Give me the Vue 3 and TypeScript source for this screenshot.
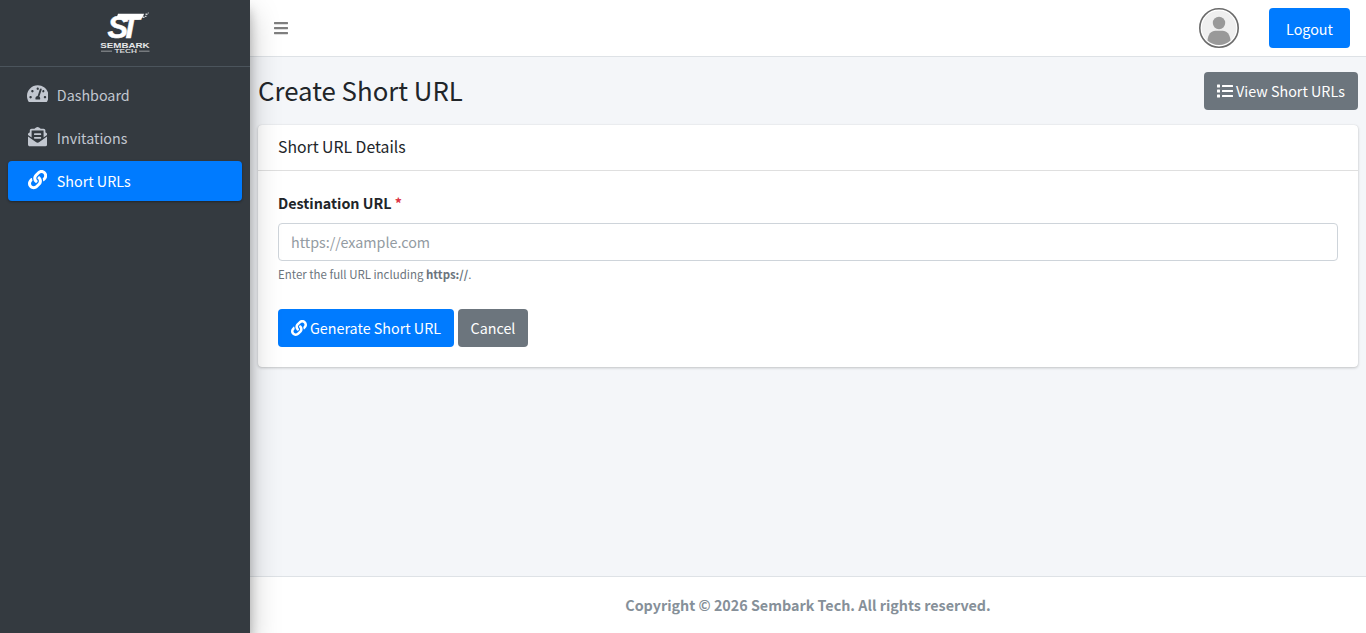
<script setup lang="ts">
interface Glyph {
  box: string
  d: string
  width: number
}

const icons: Record<string, Glyph> = {
  gauge: {
    box: '0 0 576 512',
    width: 1.125,
    d: 'M288 32C128.94 32 0 160.94 0 320c0 52.8 14.25 102.26 39.06 144.8 5.61 9.62 16.3 15.2 27.44 15.2h443c11.14 0 21.83-5.58 27.44-15.2C561.75 422.26 576 372.8 576 320c0-159.06-128.94-288-288-288zm0 64c14.71 0 26.58 10.13 30.32 23.65-1.11 2.26-2.64 4.23-3.45 6.67l-9.22 27.67c-5.13 3.49-10.97 6.01-17.64 6.01-17.67 0-32-14.33-32-32S270.33 96 288 96zM96 384c-17.67 0-32-14.33-32-32s14.33-32 32-32 32 14.33 32 32-14.33 32-32 32zm48-160c-17.67 0-32-14.33-32-32s14.33-32 32-32 32 14.33 32 32-14.33 32-32 32zm246.77-72.41l-61.33 184C343.13 347.33 352 364.54 352 384c0 11.72-3.38 22.55-8.88 32H232.88c-5.5-9.45-8.88-20.28-8.88-32 0-33.94 26.5-61.43 59.9-63.59l61.34-184.01c4.17-12.56 17.73-19.45 30.36-15.17 12.57 4.19 19.35 17.79 15.17 30.36zm14.66 57.2l15.52-46.55c3.47-1.29 7.13-2.23 11.05-2.23 17.67 0 32 14.33 32 32s-14.33 32-32 32c-11.38-.01-20.89-6.28-26.57-15.22zM480 384c-17.67 0-32-14.33-32-32s14.33-32 32-32 32 14.33 32 32-14.33 32-32 32z',
  },
  envelope: {
    box: '0 0 512 512',
    width: 1,
    d: 'M176 216h160c8.84 0 16-7.16 16-16v-16c0-8.84-7.16-16-16-16H176c-8.84 0-16 7.16-16 16v16c0 8.84 7.16 16 16 16zm-16 80c0 8.84 7.16 16 16 16h160c8.84 0 16-7.16 16-16v-16c0-8.84-7.16-16-16-16H176c-8.84 0-16 7.16-16 16v16zm96 121.13c-16.42 0-32.84-5.06-46.86-15.19L0 250.86V464c0 26.51 21.49 48 48 48h416c26.51 0 48-21.49 48-48V250.86L302.86 401.94c-14.02 10.12-30.44 15.19-46.86 15.19zm237.61-254.18c-8.85-6.94-17.24-13.47-29.61-22.81V96c0-26.51-21.49-48-48-48h-77.55c-3.04-2.2-5.87-4.26-9.04-6.56C312.6 29.17 279.2-.35 256 0c-23.2-.35-56.59 29.17-73.41 41.44-3.17 2.3-6 4.36-9.04 6.56H96c-26.51 0-48 21.49-48 48v44.14c-12.37 9.33-20.76 15.87-29.61 22.81A47.995 47.995 0 0 0 0 200.72v10.65l96 69.35V96h320v184.72l96-69.35v-10.65c0-14.74-6.78-28.67-18.39-37.77z',
  },
  link: {
    box: '0 0 512 512',
    width: 1,
    d: 'M326.612 185.391c59.747 59.809 58.927 155.698.36 214.59-.11.12-.24.25-.36.37l-67.2 67.2c-59.27 59.27-155.699 59.262-214.96 0-59.27-59.26-59.27-155.7 0-214.96l37.106-37.106c9.84-9.84 26.786-3.3 27.294 10.606.648 17.722 3.826 35.527 9.69 52.721 1.986 5.822.567 12.262-3.783 16.612l-13.087 13.087c-28.026 28.026-28.905 73.66-1.155 101.96 28.024 28.579 74.086 28.749 102.325.51l67.2-67.19c28.191-28.191 28.073-73.757 0-101.83-3.701-3.694-7.429-6.564-10.341-8.569a16.037 16.037 0 0 1-6.947-12.606c-.396-10.567 3.348-21.456 11.698-29.806l21.054-21.055c5.521-5.521 14.182-6.199 20.584-1.731a152.482 152.482 0 0 1 20.522 17.197zM467.547 44.449c-59.261-59.262-155.69-59.27-214.96 0l-67.2 67.2c-.12.12-.25.25-.36.37-58.566 58.892-59.387 154.781.36 214.59a152.454 152.454 0 0 0 20.521 17.196c6.402 4.468 15.064 3.789 20.584-1.731l21.054-21.055c8.35-8.35 12.094-19.239 11.698-29.806a16.037 16.037 0 0 0-6.947-12.606c-2.912-2.005-6.64-4.875-10.341-8.569-28.073-28.073-28.191-73.639 0-101.83l67.2-67.19c28.239-28.239 74.3-28.069 102.325.51 27.75 28.3 26.872 73.934-1.155 101.96l-13.087 13.087c-4.35 4.35-5.769 10.79-3.783 16.612 5.864 17.194 9.042 34.999 9.69 52.721.509 13.906 17.454 20.446 27.294 10.606l37.106-37.106c59.271-59.259 59.271-155.699.001-214.959z',
  },
}

const menu = [
  { label: 'Dashboard', icon: icons.gauge, active: false },
  { label: 'Invitations', icon: icons.envelope, active: false },
  { label: 'Short URLs', icon: icons.link, active: true },
]
</script>

<template>
  <div class="wrapper">
    <aside class="sidebar">
      <a class="brand">
        <svg class="brand-logo" width="54" height="44" viewBox="98 11 54 44" fill="#fff">
          <g font-family="Liberation Sans, sans-serif" font-weight="700">
            <text x="107.5 120.5" y="37.5" font-style="italic" font-size="31" stroke="#fff" stroke-width="0.5">ST</text>
            <text x="100.3" y="47.900" font-size="7.6" textLength="49.4" lengthAdjust="spacingAndGlyphs" fill="#e6e7e8">SEMBARK</text>
            <text x="114.5" y="53" font-size="4.8" textLength="22.5" lengthAdjust="spacingAndGlyphs" fill="#d0d2d4">TECH</text>
          </g>
          <path d="M118 13.800h26c-1 3.500-2.500 5.700-6 5.700h-22z" />
          <path d="M101 50.700h11v.9h-11zM139 50.700h10.500v.9H139z" opacity="0.65" />
          <path d="M145.500 13.500h2v1.500h-2zM142.500 16.500h2v1.500h-2zM145 15.800h1.500v1.300H145zM147.800 12.500h1v1h-1z" opacity="0.75" />
        </svg>
      </a>
      <nav class="menu">
        <a v-for="item in menu" :key="item.label" class="menu-item" :class="{ active: item.active }">
          <span class="menu-icon">
            <svg :viewBox="item.icon.box" :width="19.2 * item.icon.width" height="19.2" fill="currentColor">
              <path :d="item.icon.d" />
            </svg>
          </span>
          <span>{{ item.label }}</span>
        </a>
      </nav>
    </aside>

    <div class="main">
      <header class="topbar">
        <svg class="bars" viewBox="0 0 448 512" width="14" height="16" fill="currentColor">
          <path d="M16 132h416c8.837 0 16-7.163 16-16V76c0-8.837-7.163-16-16-16H16C7.163 60 0 67.163 0 76v40c0 8.837 7.163 16 16 16zm0 160h416c8.837 0 16-7.163 16-16v-40c0-8.837-7.163-16-16-16H16c-8.837 0-16 7.163-16 16v40c0 8.837 7.163 16 16 16zm0 160h416c8.837 0 16-7.163 16-16v-40c0-8.837-7.163-16-16-16H16c-8.837 0-16 7.163-16 16v40c0 8.837 7.163 16 16 16z" />
        </svg>
        <div class="account">
          <svg width="40" height="40" viewBox="0 0 40 40">
            <circle cx="20" cy="20" r="19.200" fill="#fff" stroke="#6b6b6b" stroke-width="1.600" />
            <circle cx="20" cy="20" r="17.300" fill="#efefef" />
            <circle cx="20" cy="15" r="6.200" fill="#999" />
            <path d="M8.500 32.500c.5-6 3.500-9.700 8-9.700h7c4.500 0 7.500 3.700 8 9.700A17 17 0 0 1 20 37a17 17 0 0 1-11.500-4.500z" fill="#999" />
          </svg>
          <button class="btn primary logout">Logout</button>
        </div>
      </header>

      <main class="content">
        <div class="page-head">
          <h1>Create Short URL</h1>
          <button class="btn secondary view">
            <svg viewBox="0 0 512 512" width="16" height="16" fill="currentColor">
              <path d="M80 368H16a16 16 0 0 0-16 16v64a16 16 0 0 0 16 16h64a16 16 0 0 0 16-16v-64a16 16 0 0 0-16-16zm0-320H16A16 16 0 0 0 0 64v64a16 16 0 0 0 16 16h64a16 16 0 0 0 16-16V64a16 16 0 0 0-16-16zm0 160H16a16 16 0 0 0-16 16v64a16 16 0 0 0 16 16h64a16 16 0 0 0 16-16v-64a16 16 0 0 0-16-16zm416 176H176a16 16 0 0 0-16 16v32a16 16 0 0 0 16 16h320a16 16 0 0 0 16-16v-32a16 16 0 0 0-16-16zm0-320H176a16 16 0 0 0-16 16v32a16 16 0 0 0 16 16h320a16 16 0 0 0 16-16V80a16 16 0 0 0-16-16zm0 160H176a16 16 0 0 0-16 16v32a16 16 0 0 0 16 16h320a16 16 0 0 0 16-16v-32a16 16 0 0 0-16-16z" />
            </svg>
            <span>View Short URLs</span>
          </button>
        </div>

        <section class="card">
          <div class="card-header">Short URL Details</div>
          <form class="card-body" @submit.prevent>
            <label for="destination">Destination URL <span class="required">*</span></label>
            <input id="destination" type="text" placeholder="https://example.com" />
            <small>Enter the full URL including <b>https://</b>.</small>
            <div class="actions">
              <button class="btn primary generate">
                <svg :viewBox="icons.link.box" width="16" height="16" fill="currentColor">
                  <path :d="icons.link.d" />
                </svg>
                <span>Generate Short URL</span>
              </button>
              <button class="btn secondary cancel">Cancel</button>
            </div>
          </form>
        </section>
      </main>

      <footer class="footer">Copyright © 2026 Sembark Tech. All rights reserved.</footer>
    </div>
  </div>
</template>

<style>
body {
  margin: 0;
  overflow: hidden;
}
</style>

<style scoped>
.wrapper,
.wrapper * {
  box-sizing: border-box;
}

.wrapper {
  display: flex;
  height: 100vh;
  font-family: 'Source Sans Pro', 'Noto Sans CJK SC', sans-serif;
  font-size: 14.32px;
  line-height: 24px;
  color: #212529;
  background: #f4f6f9;
  white-space: nowrap;
}

.sidebar {
  position: relative;
  z-index: 2;
  flex: 0 0 250px;
  background: #343a40;
  box-shadow: 0 14px 28px rgba(0, 0, 0, 0.25), 0 10px 10px rgba(0, 0, 0, 0.22);
}

.brand {
  display: flex;
  justify-content: center;
  height: 67px;
  padding-top: 11px;
  border-bottom: 1px solid #4b545c;
}

.menu {
  display: flex;
  flex-direction: column;
  gap: 3px;
  padding: 8px;
}

.menu-item {
  display: flex;
  align-items: center;
  height: 40px;
  padding: 0 16px;
  border-radius: 4px;
  color: #c2c7d0;
}

.menu-item.active {
  color: #fff;
  background: #007bff;
  box-shadow: 0 1px 3px rgba(0, 0, 0, 0.12), 0 1px 2px rgba(0, 0, 0, 0.24);
}

.menu-icon {
  display: flex;
  justify-content: center;
  width: 25.6px;
  margin: 0 6.400px 2px 0.800px;
}

.main {
  display: flex;
  flex: 1;
  flex-direction: column;
  min-width: 0;
}

.topbar {
  display: flex;
  align-items: center;
  justify-content: space-between;
  height: 57px;
  padding: 0 16px 0 24px;
  background: #fff;
  border-bottom: 1px solid #dee2e6;
}

.bars {
  color: rgba(0, 0, 0, 0.5);
}

.account {
  display: flex;
  align-items: center;
  gap: 30px;
}

.btn {
  display: flex;
  align-items: center;
  justify-content: center;
  height: 38px;
  padding: 0;
  border: 0;
  border-radius: 4px;
  font: inherit;
  color: #fff;
}

.primary {
  background: #007bff;
}

.secondary {
  background: #6c757d;
}

.logout {
  width: 81px;
  height: 40px;
  padding-top: 2px;
}

.view {
  width: 154px;
  gap: 3px;
}

.content {
  flex: 1;
  padding: 15px 8px;
}

.page-head {
  display: flex;
  align-items: center;
  justify-content: space-between;
  height: 38px;
  margin-bottom: 15px;
}

h1 {
  margin: 0 0 2px;
  font-size: 25.8px;
  font-weight: 400;
  line-height: 34px;
}

.card {
  height: 242px;
  background: #fff;
  border-radius: 4px;
  box-shadow: 0 0 1px rgba(0, 0, 0, 0.125), 0 1px 3px rgba(0, 0, 0, 0.2);
}

.card-header {
  height: 46px;
  padding: 10px 20px;
  border-bottom: 1px solid rgba(0, 0, 0, 0.125);
  font-size: 15.77px;
}

.card-body {
  display: flex;
  flex-direction: column;
  padding: 20px;
}

label {
  margin-bottom: 8px;
  font-weight: 700;
}

.required {
  color: #dc3545;
}

input {
  height: 38px;
  padding: 5px 12px 7px;
  border: 1px solid #ced4da;
  border-radius: 4px;
  font: inherit;
  color: #495057;
}

input::placeholder {
  color: #939ba2;
  opacity: 1;
}

small {
  margin-top: 4px;
  font-size: 11.46px;
  line-height: 19px;
  color: #6c757d;
}

.actions {
  display: flex;
  gap: 4px;
  margin-top: 25px;
}

.generate {
  width: 176px;
  gap: 3px;
}

.cancel {
  width: 70px;
}

.footer {
  height: 57px;
  padding-top: 16px;
  border-top: 1px solid #dee2e6;
  font-weight: 700;
  text-align: center;
  color: #869099;
  background: #fff;
}
</style>
